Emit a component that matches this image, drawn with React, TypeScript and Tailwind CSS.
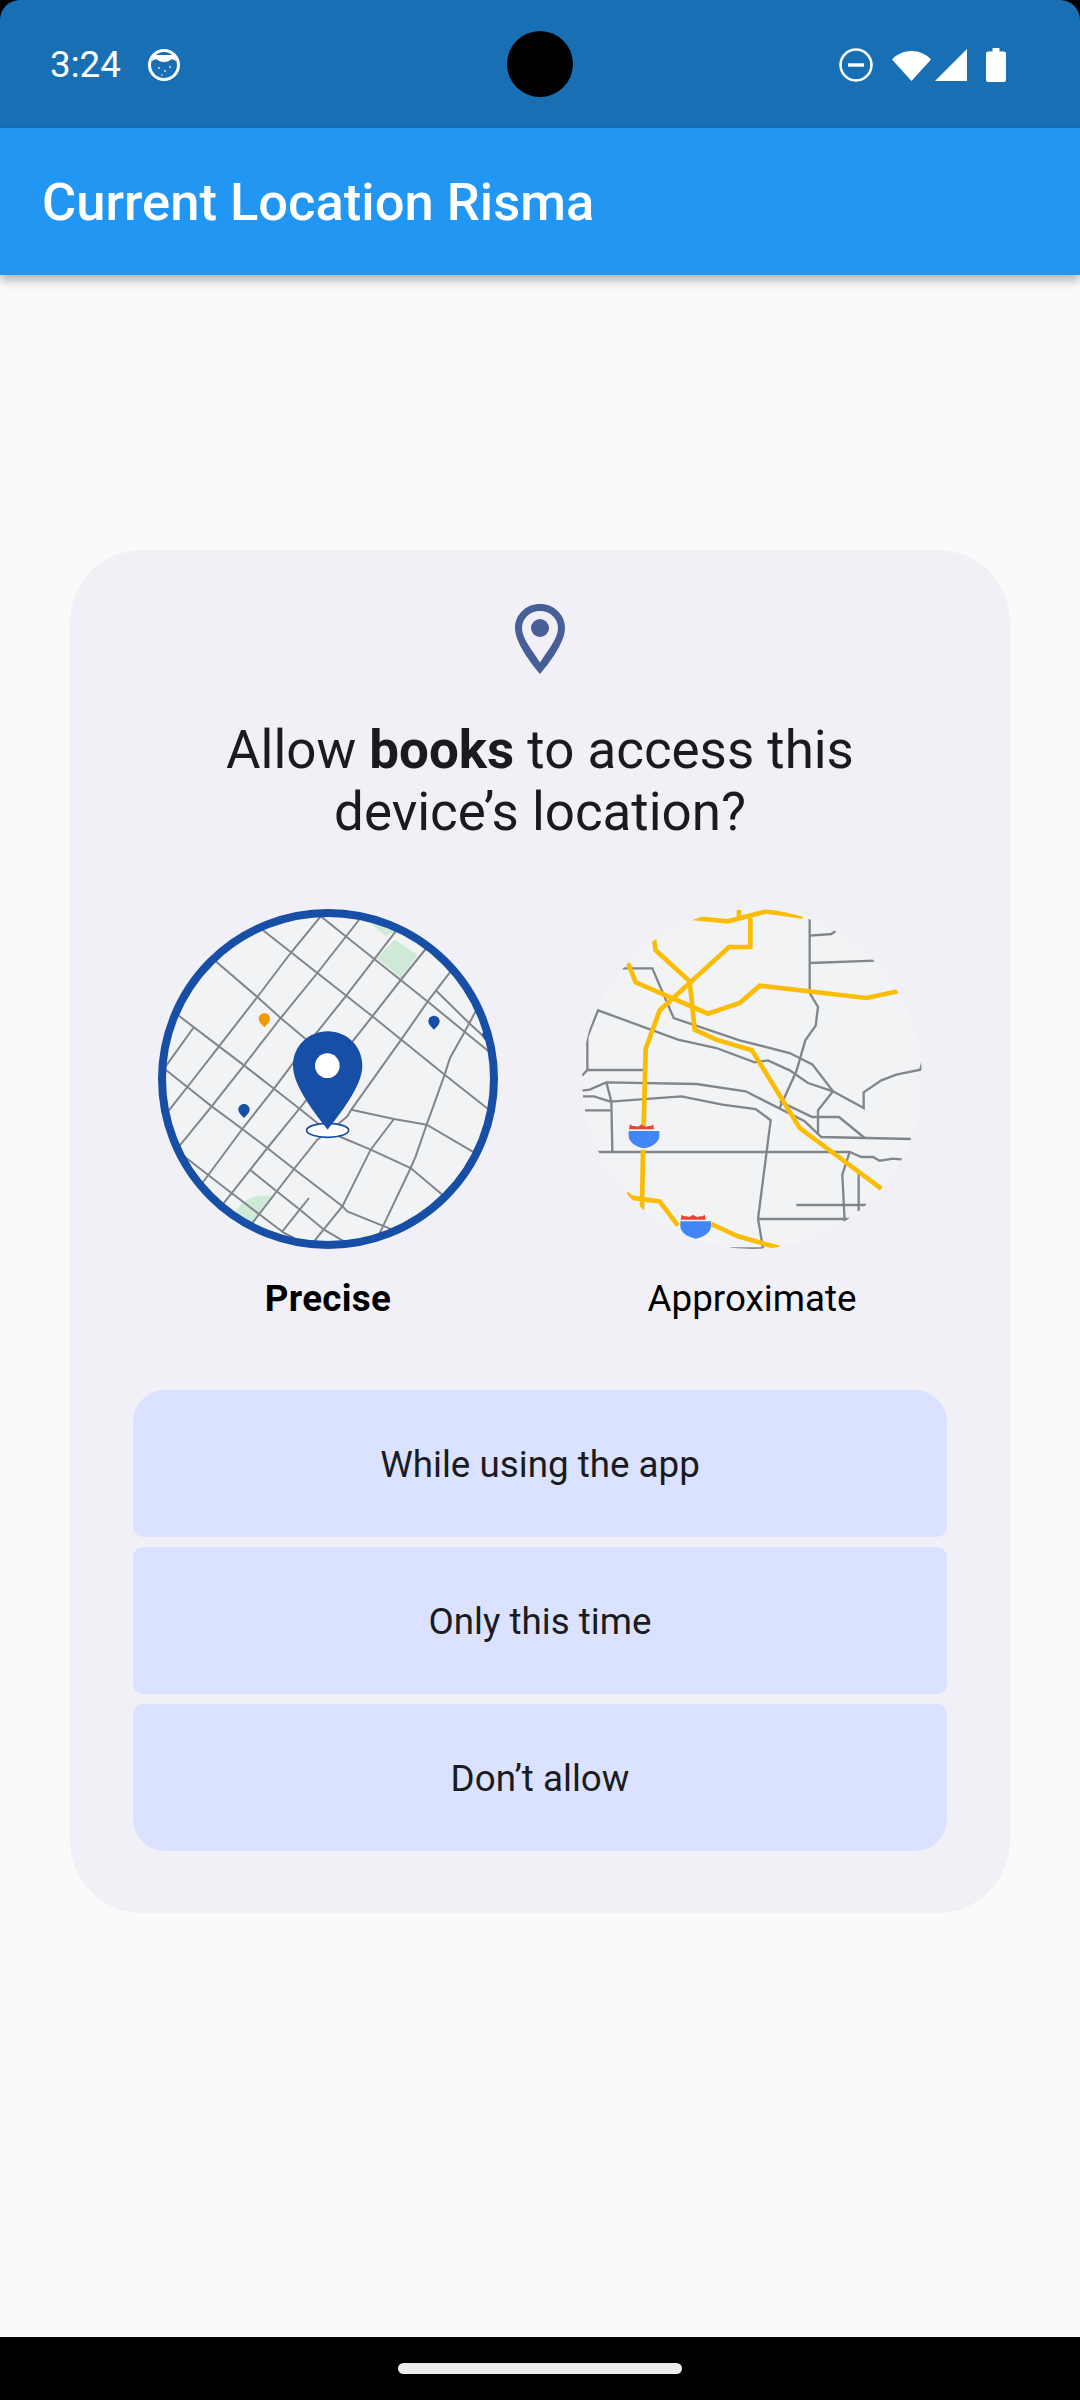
import React from 'react'

// coordinates below are traced at 3x, hence the 1020-wide viewBoxes
const preciseRoads = [
  '540,80 615,140 860,335 1050,490',
  '365,120 530,250 695,380 912,555 1045,660',
  '225,215 350,322 420,385 495,448 600,535',
  '110,375 235,470 310,527 400,597 490,668 530,700 600,742 690,780 810,835 905,915',
  '75,540 140,592 213,650 305,718 380,775 460,838 605,950 620,965 755,1020',
  '130,800 250,893 430,1030 460,1045',
  '330,842 408,905 478,960 550,1020 610,1055',
  '885,302 985,400 1050,460',
  '540,80 450,190 350,322 235,470 140,592 80,668',
  '657,88 530,250 420,385 310,527 213,650 115,770',
  '765,125 615,320 495,470 400,597 305,718 185,880',
  '855,178 785,265 695,380 640,450 490,640 380,775 248,942',
  '930,245 865,330 780,452 632,660 620,680 590,705 530,750 460,838 335,1000',
  '632,660 760,688 858,705 1000,788',
  '160,412 75,530',
  '1005,365 970,430 928,505 912,555 858,705 825,800 810,835 715,1035',
  '760,688 690,780 605,950 520,1055',
  '505,925 425,1025',
]

const approxGrey = [
  '750,88 750,310 775,352 768,408 737,452 710,545 660,655',
  '750,138 815,133 830,122',
  '750,220 945,213',
  '188,236 278,236 342,385 540,452 690,490 758,524 820,605 775,662 775,735',
  '83,540 83,442 115,362 355,450 470,475 585,518 625,512 690,542 745,580 820,605 912,655 912,608 965,572 1010,555 1082,540 1090,510',
  '67,558 83,541 252,541',
  '67,603 90,600 140,578 410,583 558,605 735,695 785,742 1055,748',
  '660,635 758,682 838,682 915,745',
  '140,578 155,635 158,785',
  '70,620 103,620 152,636 365,620 488,645 588,658 633,692 595,988 610,1075',
  '75,662 152,662',
  '115,787 870,787 905,802 940,802 960,813 1000,807 1030,810',
  '870,787 848,855 855,995',
  '897,850 897,965',
  '710,946 920,946',
  '595,988 870,988',
  '510,1076 610,1076',
]

const approxYellow = [
  '400,85 505,95 620,65 730,80',
  '538,60 538,85',
  '572,85 572,172 508,172 300,362 258,478 252,710',
  '250,780 247,962',
  '283,150 288,182 390,275 405,420 470,450 577,482 720,715 965,897',
  '205,220 228,278 445,372 540,340 600,288 920,325 1015,305',
  '200,912 215,924 300,935 355,1008',
  '455,1003 535,1040 660,1075',
]

const SmallPin = ({ x, y, color }: { x: number; y: number; color: string }) => (
  <path
    d={`M${x} ${y - 21}c-9.5 0-17 7.5-17 16.500 0 9 10 18.500 17 25.500 7-7 17-16.500 17-25.500 0-9-7.500-16.500-17-16.500z`}
    fill={color}
  />
)

const Shield = ({ x, y }: { x: number; y: number }) => (
  <g transform={`translate(${x} ${y})`}>
    <path d="M-45 -22l3-15 7 5 8 0 6 2 7-2 6-5 7 5 7 2 8-2 7 0 6-5 3 15z" fill="#ea4335" />
    <path d="M-46 -17h92v14c0 20-22 34-46 38-24-4-46-18-46-38z" fill="#4285f4" />
  </g>
)

const PreciseMap = () => (
  <svg viewBox="52 58 1020 1020" className="w-[340px] h-[340px]">
    <defs>
      <clipPath id="precise-clip">
        <circle cx="562" cy="568" r="500" />
      </clipPath>
    </defs>
    <circle cx="562" cy="568" r="500" fill="#f1f3f4" />
    <g clipPath="url(#precise-clip)">
      <path d="M762 150L830 195 782 265 708 205z" fill="#ceead6" />
      <path d="M690 100L765 122 735 140z" fill="#ceead6" />
      <path d="M350 918L395 918 335 1000 285 965 310 935z" fill="#ceead6" />
      {preciseRoads.map((pts) => (
        <polyline key={pts} points={pts} fill="none" stroke="#80868b" strokeWidth="6" />
      ))}
      <SmallPin x={371} y={392} color="#f29900" />
      <SmallPin x={880} y={399} color="#174ea6" />
      <SmallPin x={310} y={664} color="#174ea6" />
      <SmallPin x={1042} y={440} color="#174ea6" />
    </g>
    <circle cx="562" cy="568" r="498" fill="none" stroke="#174ea6" strokeWidth="24" />
    <ellipse cx="561" cy="722" rx="63" ry="21" fill="#fff" stroke="#174ea6" strokeWidth="5" />
    <path
      d="M561 425C503 425 457 470 457 528C457 590 525 672 561 720C597 672 665 590 665 528C665 470 619 425 561 425z"
      fill="#174ea6"
    />
    <circle cx="560" cy="528" r="37" fill="#fff" />
  </svg>
)

const ApproximateMap = () => (
  <svg viewBox="67 58 1020 1020" className="w-[340px] h-[340px]">
    <defs>
      <clipPath id="approx-clip">
        <circle cx="577" cy="568" r="510" />
      </clipPath>
    </defs>
    <circle cx="577" cy="568" r="510" fill="#f1f3f4" />
    <g clipPath="url(#approx-clip)">
      {approxGrey.map((pts) => (
        <polyline key={pts} points={pts} fill="none" stroke="#80868b" strokeWidth="7" />
      ))}
      {approxYellow.map((pts) => (
        <polyline key={pts} points={pts} fill="none" stroke="#fbbc04" strokeWidth="14" />
      ))}
      <Shield x={253} y={741} />
      <Shield x={408} y={1012} />
    </g>
  </svg>
)

const StatusBar = () => (
  <div className="relative h-[128px] bg-[#186fb4] rounded-t-[20px] flex items-center justify-between pl-[50px] pr-[74px] shrink-0">
    <div className="flex items-center gap-[27px] text-white text-[36.75px] leading-[44px] mt-[1px]">
      <span>3:24</span>
      <svg viewBox="0 0 32 32" className="w-[32px] h-[32px]">
        <circle cx="16" cy="16" r="14.500" fill="#186fb4" stroke="#fff" strokeWidth="3" />
        <path d="M5 6h22l1 6-4-2c-2 1.500-4 3-8 3s-6-1.500-8-3l-4 2z" fill="#fff" />
        <circle cx="11" cy="19" r="1" fill="#cfe2f3" />
        <circle cx="17" cy="22" r="1" fill="#cfe2f3" />
        <circle cx="22" cy="18" r="1" fill="#cfe2f3" />
        <circle cx="14" cy="26" r="0.800" fill="#cfe2f3" />
      </svg>
    </div>
    <span className="absolute left-[507px] top-[31px] w-[66px] h-[66px] rounded-full bg-black" />
    <div className="flex items-center gap-[19px] mt-[1px]">
      <svg viewBox="0 0 34 34" className="w-[34px] h-[34px]">
        <circle cx="17" cy="17" r="15.500" fill="none" stroke="#fff" strokeWidth="2.500" />
        <rect x="9" y="15.300" width="16" height="3.400" fill="#fff" />
      </svg>
      <div className="flex items-center gap-[4px]">
        <svg viewBox="0 0 39 34" className="w-[39px] h-[34px]">
          <path d="M0 11.500C5 6 12 3 19.500 3S34 6 39 11.500L19.500 33z" fill="#fff" />
        </svg>
        <svg viewBox="0 0 32 34" className="w-[32px] h-[34px]">
          <path d="M0 33L32 1V33z" fill="#fff" />
        </svg>
      </div>
      <svg viewBox="0 0 20 34" className="w-[20px] h-[34px]">
        <path d="M6.500 0h7v3.500H18a2 2 0 0 1 2 2V32a2 2 0 0 1-2 2H2a2 2 0 0 1-2-2V5.500a2 2 0 0 1 2-2h4.500z" fill="#fff" />
      </svg>
    </div>
  </div>
)

const options = ['While using the app', 'Only this time', 'Don’t allow']

const optionShape = ['rounded-t-[32px] rounded-b-[10px]', 'rounded-[10px]', 'rounded-t-[10px] rounded-b-[32px]']

const PermissionCard = () => (
  <div className="ml-[70px] w-[940px] rounded-[72px] bg-[#f1f0f7] pt-[54px] pb-[62px] px-[63px] flex flex-col items-center">
    <svg viewBox="0 0 50 70" className="w-[50px] h-[70px]">
      <path
        fillRule="evenodd"
        d="M25 0C11 0 0 10.500 0 24C0 42 25 70 25 70S50 42 50 24C50 10.500 39 0 25 0zM25 7C15 7 7 14.500 7 24C7 35 18 47 25 58.500C32 47 43 35 43 24C43 14.500 35 7 25 7z"
        fill="#485e97"
      />
      <circle cx="25" cy="24" r="9" fill="#485e97" />
    </svg>
    <h1 className="mt-[46px] text-center text-[52.9px] leading-[61.5px] font-normal text-[#1a1b20]">
      Allow <span className="font-bold">books</span> to access this
      <br />
      device’s location?
    </h1>
    <div className="mt-[66px] flex justify-center gap-[84px]">
      <div className="w-[340px] flex flex-col items-center">
        <PreciseMap />
        <span className="mt-[28px] text-[36.75px] leading-[43px] font-bold tracking-[0.3px] text-black">Precise</span>
      </div>
      <div className="w-[340px] flex flex-col items-center">
        <ApproximateMap />
        <span className="mt-[28px] text-[36.75px] leading-[43px] text-black">Approximate</span>
      </div>
    </div>
    <div className="mt-[70px] w-full flex flex-col gap-[10px]">
      {options.map((label, i) => (
        <div
          key={label}
          className={`h-[147px] bg-[#dae2ff] flex items-center justify-center text-[36.75px] text-[#1a1b20] pt-[3px] ${optionShape[i]}`}
        >
          {label}
        </div>
      ))}
    </div>
  </div>
)

export default function App() {
  return (
    <div className="w-[1080px] h-[2400px] bg-black flex flex-col font-['Roboto',sans-serif]">
      <StatusBar />
      <div className="relative z-10 h-[147px] shrink-0 bg-[#2196f3] flex items-center pl-[42px] shadow-[0_5px_10px_rgba(0,0,0,0.3)]">
        <span className="text-white text-[52.5px] font-medium leading-none mt-[1px]">Current Location Risma</span>
      </div>
      <div className="flex-1 bg-[#fafafa] pt-[275px]">
        <PermissionCard />
      </div>
      <div className="h-[63px] shrink-0 flex items-center justify-center">
        <div className="w-[284px] h-[11px] rounded-full bg-[#ebebeb]" />
      </div>
    </div>
  )
}
